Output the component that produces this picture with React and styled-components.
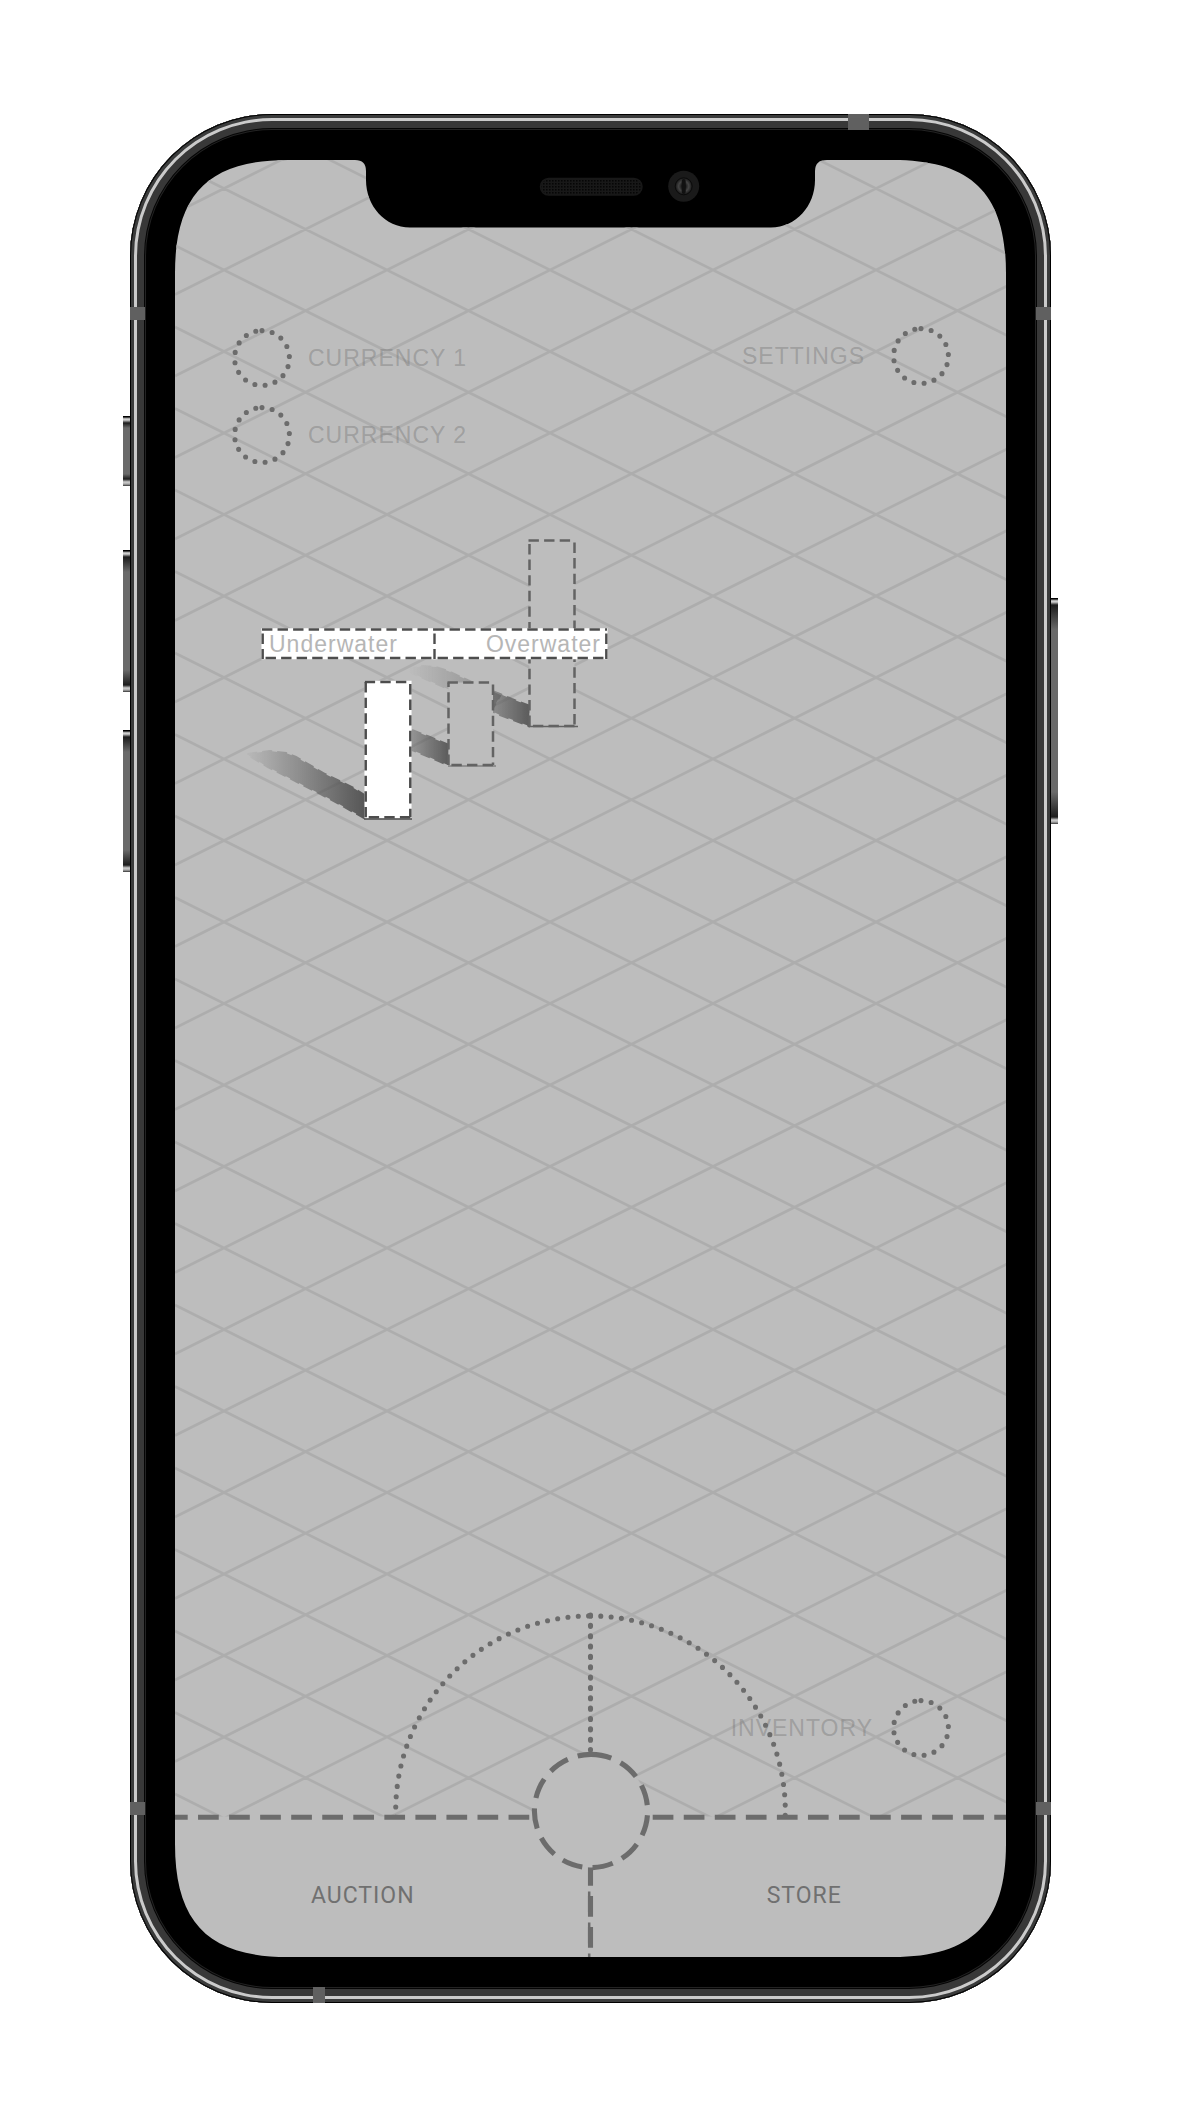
import React from "react";
import styled, { createGlobalStyle, css } from "styled-components";

const GlobalStyle = createGlobalStyle`
  *, *::before, *::after { box-sizing: border-box; }
  body { margin: 0; background: #fff; }
`;

const INK = "#6c6c6c";
const PAPER = "#bdbdbd";

const Page = styled.main`
  display: flex;
  justify-content: center;
  padding: 114px 131px 113px 130px;
  font-family: "Liberation Sans", Arial, sans-serif;
`;

const Device = styled.div`
  position: relative;
  width: 100%;
  max-width: 921px;
  padding: 46px 45px;
  border-radius: 142px;
  background: #000;
  box-shadow:
    inset 0 0 0 1px #000,
    inset 0 0 0 4px #3a3b3b,
    inset 0 0 0 7px #cbcbcb,
    inset 0 0 0 14px #383838,
    inset 0 0 0 15px #050505,
    inset 0 0 0 16px #232323;
`;

const SideKey = styled.span`
  position: absolute;
  top: ${(p) => p.$top}px;
  height: ${(p) => p.$height}px;
  width: 7px;
  ${(p) => (p.$side === "left" ? "right: 100%;" : "left: 100%;")}
  background: linear-gradient(
    #000 0 1px,
    #8a8a8a 2px,
    #cfcfcf 3px 4px,
    #555 6px,
    #1c1c1c 7px,
    #6a6a6a ${(p) => p.$fade}px,
    #6a6a6a calc(100% - ${(p) => p.$fade}px),
    #1c1c1c calc(100% - 7px),
    #555 calc(100% - 6px),
    #cfcfcf calc(100% - 4px),
    #aaa calc(100% - 2px),
    #333 100%
  );
`;

const Antenna = styled.span`
  position: absolute;
  background: #606060;
  ${(p) =>
    p.$edge === "left" || p.$edge === "right"
      ? css`
          width: 15px;
          height: 13px;
          ${p.$edge}: 0;
          top: ${p.$at}px;
        `
      : css`
          height: 16px;
          width: ${p.$length}px;
          ${p.$edge}: 0;
          left: ${p.$at}px;
        `}
`;

const Screen = styled.div`
  position: relative;
  display: flex;
  flex-direction: column;
  aspect-ratio: 831 / 1797;
`;

const Scene = styled.svg`
  position: absolute;
  inset: 0;
  width: 100%;
  height: 100%;
`;

const Hud = styled.header`
  position: relative;
  display: flex;
  justify-content: space-between;
  align-items: flex-start;
  padding: 166px 55px 0 57px;
`;

const Wallet = styled.div`
  display: flex;
  flex-direction: column;
  gap: 17px;
  padding-top: 2px;
`;

const HudButton = styled.button`
  display: flex;
  align-items: center;
  gap: ${(p) => p.$gap}px;
  padding: 0;
  border: 0;
  background: none;
  color: rgba(112, 112, 112, 0.4);
  font: 23px/28px "Liberation Sans", Arial, sans-serif;
  letter-spacing: 1px;
  cursor: pointer;
`;

const RingSvg = styled.svg`
  display: block;
  width: 60px;
  height: 60px;
`;

const Toggle = styled.div`
  position: relative;
  display: flex;
  width: 344px;
  margin: 165px 0 0 88px;
`;

const ToggleButton = styled.button`
  flex: 1;
  height: 28px;
  padding: 0 6px;
  border: 0;
  background: none;
  color: #b6b6b6;
  font: 23px/28px "Liberation Sans", Arial, sans-serif;
  letter-spacing: 1px;
  text-align: ${(p) => p.$align};
  cursor: pointer;
`;

const InventoryRow = styled.div`
  position: relative;
  display: flex;
  justify-content: flex-end;
  margin-top: auto;
  padding: 0 55px 59px 0;
`;

const Dock = styled.nav`
  position: relative;
  display: grid;
  grid-template-columns: 1fr 1fr;
  height: 140px;
`;

const DockButton = styled.button`
  padding: ${(p) => p.$padding};
  border: 0;
  background: none;
  color: #707070;
  font: 23px/28px Roboto, sans-serif;
  letter-spacing: 1px;
  cursor: pointer;
`;

const HubButton = styled.button`
  position: absolute;
  top: -66px;
  left: 50%;
  width: 120px;
  height: 120px;
  margin-left: -60px;
  padding: 0;
  border: 0;
  border-radius: 50%;
  background: none;
  cursor: pointer;
`;

const HubSvg = styled.svg`
  display: block;
  width: 120px;
  height: 120px;
`;

const circlePath = (r) => `M0 ${-r}A${r} ${r} 0 0 1 0 ${r}A${r} ${r} 0 0 1 0 ${-r}`;

const Ring = () => (
  <RingSvg viewBox="-30 -30 60 60" aria-hidden="true">
    <path d={circlePath(27.4)} fill="none" stroke={INK} strokeWidth="5.1" strokeLinecap="round" strokeDasharray="0 10.35" />
  </RingSvg>
);

// Isometric floor: two families of lines with slope 1/2.
const floorLines = [];
for (let k = -8; k < 34; k += 1) {
  const y = 245.5 + (k - 6) * 81.5;
  floorLines.push(`M175 ${y}L1007 ${y + 416}`, `M175 ${y + 49}L1007 ${y + 49 - 416}`);
}

const SCREEN_SHAPE =
  "M288 160H355Q366 160 366 171V180C366 206 385 227.500 410 227.500H771C796 227.500 815 206 815 180V171Q815 160 827 160H893" +
  "C972 160 1006 194 1006 273V1844C1006 1923 972 1957 893 1957H288C209 1957 175 1923 175 1844V273C175 194 209 160 288 160Z";

const SHADOWS = [
  { id: "near", from: 243, to: 366, d: "M366 796L352 787L325 774L296 757L286 753L270 751L247 754L251 757L268 767L330 799L364 818L366 818Z", dark: 0.95 },
  { id: "middle", from: 385, to: 449, d: "M449 745L430 737L412 730L400 725L380 735L412 750L448 765Z", dark: 0.9 },
  { id: "far-tail", from: 409, to: 500, d: "M500 696L476 684L448 671L436 667L422 666L405 670L448 689L492 710Z", dark: 0.45 },
  { id: "far", from: 455, to: 530, d: "M530 706L512 699L500 694L492 691L485 708L500 715L529 726Z", dark: 0.9 },
];

const DashedBox = ({ x, y, w, h, fill, stroke = "#636363" }) => (
  <g fill="none" stroke={stroke} strokeWidth="2.5" strokeDasharray="10.4 5.2">
    <rect x={x} y={y} width={w} height={h} fill={fill} stroke={fill === "#fff" ? "#fff" : "none"} strokeDasharray="none" />
    <path d={`M${x - 1} ${y}H${x + w}`} />
    <path d={`M${x + w} ${y + 2}V${y + h}`} />
    <path d={`M${x + w} ${y + h}H${x}`} />
    <path d={`M${x} ${y + h}V${y}`} />
  </g>
);

const SceneArt = () => (
  <Scene viewBox="175 160 831 1797" aria-hidden="true">
    <defs>
      <clipPath id="screen-shape"><path d={SCREEN_SHAPE} /></clipPath>
      <clipPath id="floor"><rect x="175" y="160" width="831" height="1656.500" /></clipPath>
      <pattern id="mesh" width="3" height="3" patternUnits="userSpaceOnUse">
        <rect width="3" height="3" fill="#181818" />
        <rect width="1.600" height="1.600" fill="#060606" />
      </pattern>
      <radialGradient id="lens">
        <stop offset="0" stopColor="#111" />
        <stop offset="0.2" stopColor="#161616" />
        <stop offset="0.6" stopColor="#444" />
        <stop offset="1" stopColor="#151515" />
      </radialGradient>
      {SHADOWS.map((s) => (
        <React.Fragment key={s.id}>
          <linearGradient id={`fade-${s.id}`} gradientUnits="userSpaceOnUse" x1={s.from} x2={s.to} y1="0" y2="0">
            <stop offset="0" stopColor="#505050" stopOpacity="0" />
            <stop offset="1" stopColor="#505050" stopOpacity={s.dark} />
          </linearGradient>
          <mask id={`mask-${s.id}`} maskUnits="userSpaceOnUse" x="200" y="600" width="400" height="260">
            <path d={s.d} fill="#fff" stroke="#fff" strokeWidth="2" strokeDasharray="10 5" />
          </mask>
        </React.Fragment>
      ))}
    </defs>
    <g clipPath="url(#screen-shape)">
      <rect x="175" y="160" width="831" height="1797" fill={PAPER} />
      <path d={floorLines.join("")} fill="none" stroke="#adadad" strokeWidth="2.600" clipPath="url(#floor)" />

      {SHADOWS.map((s) => (
        <rect key={s.id} x="200" y="600" width="400" height="260" fill={`url(#fade-${s.id})`} mask={`url(#mask-${s.id})`} />
      ))}
      <DashedBox x={529.5} y={540.5} w={45} h={185.5} fill={PAPER} />
      <path d="M528 726.500H578" stroke="#636363" strokeWidth="1.500" />
      <DashedBox x={448.5} y={682.5} w={44.5} h={82.5} fill={PAPER} />
      <path d="M448 766H496" stroke="#636363" strokeWidth="1" />
      <DashedBox x={365.7} y={682} w={44.6} h={135.3} fill="#fff" stroke="#4d4d4d" />
      <path d="M364 819H412" stroke="#4d4d4d" strokeWidth="1.500" />

      <rect x="262.700" y="629.500" width="343.600" height="28.500" fill="#fff" stroke="#fff" strokeWidth="2.500" />
      <g stroke="#4d4d4d" strokeWidth="2.400" strokeDasharray="10.4 5.15">
        <path d="M262 629.500H434M434 629.500H607" />
        <path d="M262 658H434M434 658H607" strokeDashoffset="12" />
        <path d="M262.700 629V659M434.500 629V659M606.300 629V659" strokeDashoffset="11" />
      </g>

      <g fill="none" stroke={INK} strokeLinecap="round" strokeWidth="5.100">
        <g clipPath="url(#floor)">
          <g transform="translate(590.500 1810.700)">
            <path d={circlePath(194.8)} strokeDasharray="0 10.352" />
          </g>
        </g>
        <path d="M590.500 1615V1750" strokeDasharray="1 9.35" />
      </g>
      <g stroke={INK} strokeWidth="5.100" strokeDasharray="20.7 10.35">
        <path d="M167 1817.300H530" />
        <path d="M652.700 1817.300H1006" />
        <path d="M590.500 1865V1957" />
        <path d="M589.200 1891.400V1957" strokeWidth="2.500" />
      </g>
    </g>

    <rect x="540.500" y="178.500" width="101.500" height="16.500" rx="8.200" fill="url(#mesh)" stroke="#181818" strokeWidth="1.500" />
    <circle cx="683.700" cy="186.300" r="15.500" fill="#1a1a1a" />
    <circle cx="683.700" cy="186.300" r="8.500" fill="url(#lens)" stroke="#0b0b0b" />
    <rect x="681.700" y="179" width="4" height="15" rx="2" fill="#111" />
  </Scene>
);

export default function App() {
  return (
    <>
      <GlobalStyle />
      <Page>
        <Device>
          <SideKey $side="left" $top={302} $height={70} $fade={12} />
          <SideKey $side="left" $top={436} $height={142} $fade={22} />
          <SideKey $side="left" $top={616} $height={142} $fade={22} />
          <SideKey $side="right" $top={484} $height={226} $fade={32} />
          <Antenna $edge="top" $at={718} $length={21} />
          <Antenna $edge="bottom" $at={183} $length={12} />
          <Antenna $edge="left" $at={193} />
          <Antenna $edge="right" $at={193} />
          <Antenna $edge="left" $at={1688} />
          <Antenna $edge="right" $at={1688} />
          <Screen>
            <SceneArt />
            <Hud>
              <Wallet>
                <HudButton type="button" $gap={16}><Ring />CURRENCY 1</HudButton>
                <HudButton type="button" $gap={16}><Ring />CURRENCY 2</HudButton>
              </Wallet>
              <HudButton type="button" $gap={26}>SETTINGS<Ring /></HudButton>
            </Hud>
            <Toggle>
              <ToggleButton type="button" $align="left">Underwater</ToggleButton>
              <ToggleButton type="button" $align="right">Overwater</ToggleButton>
            </Toggle>
            <InventoryRow>
              <HudButton type="button" $gap={18}>INVENTORY<Ring /></HudButton>
            </InventoryRow>
            <Dock>
              <DockButton type="button" $padding="17px 40px 0 0">AUCTION</DockButton>
              <DockButton type="button" $padding="17px 0 0 12px">STORE</DockButton>
              <HubButton type="button" aria-label="Menu">
                <HubSvg viewBox="-60 -60 120 120" aria-hidden="true">
                  <path d={circlePath(56.6)} fill={PAPER} stroke={INK} strokeWidth="5.1" strokeDasharray="20.7 10.35" />
                </HubSvg>
              </HubButton>
            </Dock>
          </Screen>
        </Device>
      </Page>
    </>
  );
}
